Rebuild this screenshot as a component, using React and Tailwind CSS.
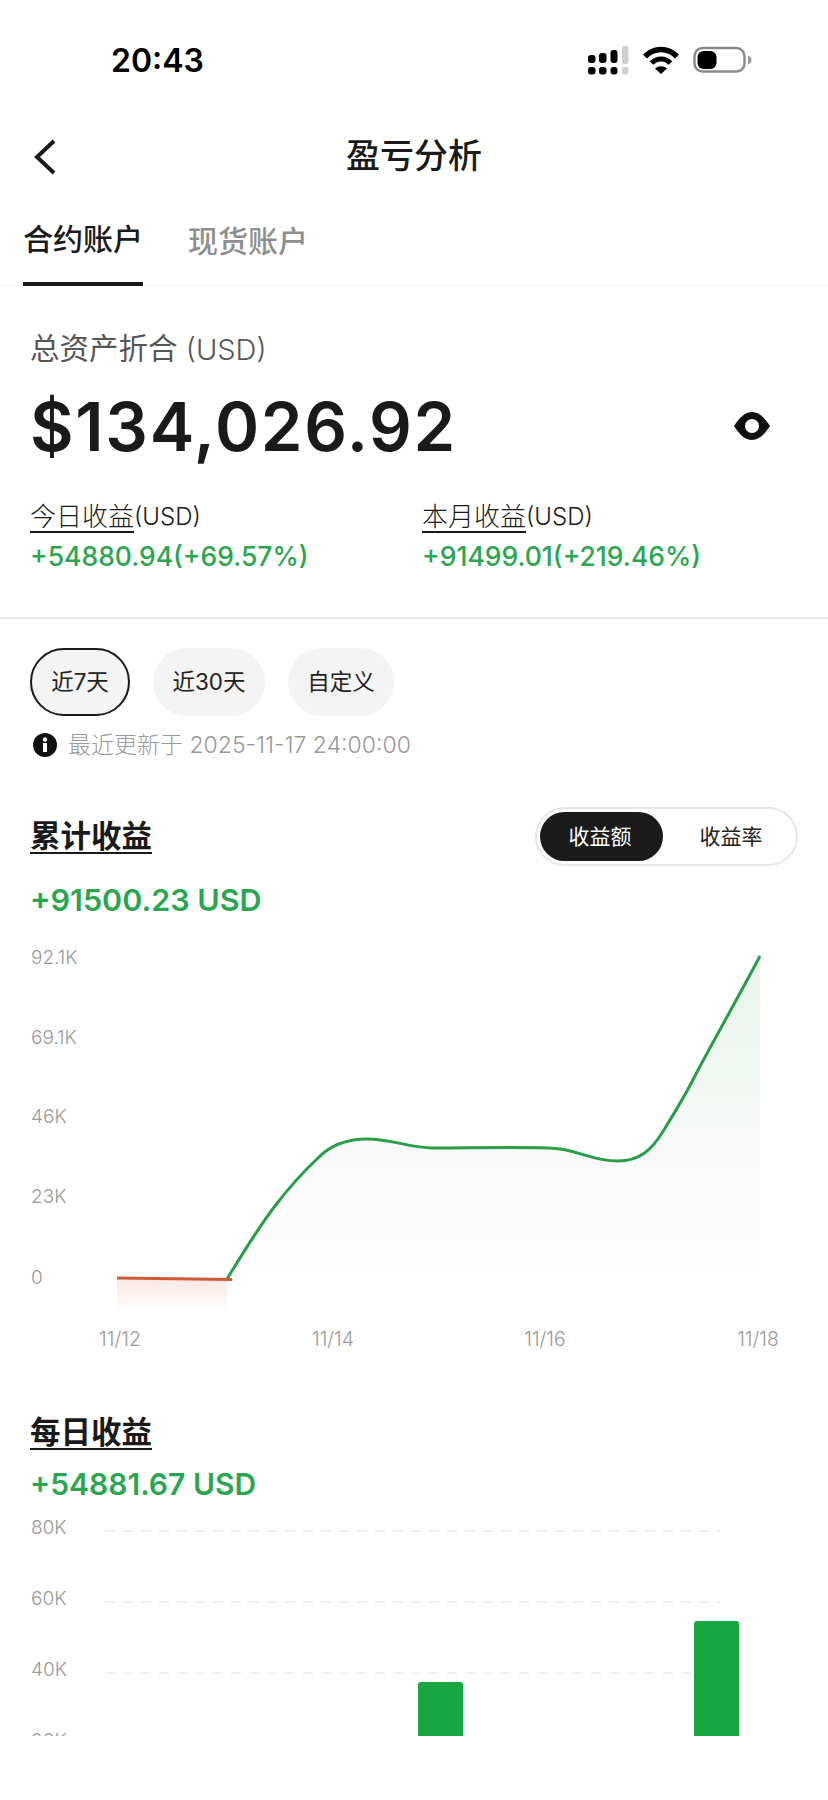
import React from "react";

const linePath =
  "M227 1280 C241 1257 258 1229 275 1207 C291 1186 303 1173 317 1160 C329 1147 345 1140 367 1140 " +
  "C392 1140 410 1149 433 1149 C470 1149 510 1148 549 1149 C575 1149 590 1162 618 1162 " +
  "C640 1162 652 1150 662 1134 C672 1118 685 1097 697 1073 C720 1030 740 995 760 957";

const cumulativeY = [["92.1K", 958], ["69.1K", 1038], ["46K", 1117], ["23K", 1197], ["0", 1278]];
const cumulativeX = [["11/12", 120], ["11/14", 333], ["11/16", 545], ["11/18", 758]];
const dailyY = [["80K", 1527, 1531], ["60K", 1598, 1602], ["40K", 1669, 1673], ["20K", 1740, 1744]];

function StatusIcons() {
  return (
    <svg width="166" height="30" viewBox="588 46 166 30">
      <g fill="#000">
        <rect x="588" y="55" width="7.5" height="8" rx="3" />
        <rect x="599" y="53" width="7.5" height="10" rx="3" />
        <rect x="610.500" y="50" width="7" height="13" rx="3" />
        <rect x="588" y="67" width="7.500" height="7.500" rx="3" />
        <rect x="599" y="67" width="7.500" height="7.500" rx="3" />
        <rect x="610.500" y="67" width="7" height="7.500" rx="3" />
      </g>
      <rect x="622" y="46" width="6.500" height="18" rx="2" fill="#cfcfcf" />
      <rect x="622" y="67" width="6.500" height="7.500" rx="2" fill="#cfcfcf" />
      <path d="M645 56.500C654 47 668 47 677 56.500" fill="none" stroke="#000" strokeWidth="5.500" />
      <path d="M651.500 63C657 57.500 665 57.500 670.500 63" fill="none" stroke="#000" strokeWidth="5" />
      <path d="M655 68.500C658.500 65.500 663.500 65.500 667 68.500L661 74Z" fill="#000" />
      <rect x="694.500" y="48" width="50" height="23.500" rx="8" fill="none" stroke="#8a8a8a" strokeWidth="2.500" />
      <rect x="697.500" y="51" width="19" height="18" rx="6" fill="#000" />
      <path d="M748 55.500C750.500 56.500 751.500 58 751.500 60C751.500 62 750.500 63.500 748 64.500Z" fill="#9a9a9a" />
    </svg>
  );
}

function Pill({ label, active, width }) {
  return (
    <div
      className={`flex h-[68px] items-center justify-center rounded-full bg-[#f4f4f4] text-[22.500px] text-[#222] ${width} ${
        active ? "border-2 border-[#1a1a1a]" : ""
      }`}
    >
      {label}
    </div>
  );
}

export default function App() {
  return (
    <div
      className="h-[1800px] w-[828px] overflow-hidden bg-white text-[#1a1a1a]"
      style={{ fontFamily: "Inter, 'Noto Sans CJK SC', sans-serif" }}
    >
      {/* status bar */}
      <div className="flex h-[122px] items-center justify-between pl-[111px] pr-[74px]">
        <span className="text-[32px] font-semibold leading-none text-black">20:43</span>
        <StatusIcons />
      </div>

      {/* header */}
      <div className="grid h-[70px] grid-cols-[1fr_auto_1fr] items-center pl-[33px]">
        <svg width="24" height="36" viewBox="0 0 24 36" fill="none">
          <path d="M21 2L4 18L21 34" stroke="#1a1a1a" strokeWidth="4" />
        </svg>
        <div className="pb-[3px] pr-[33px] text-[34px] font-medium leading-none">盈亏分析</div>
      </div>

      {/* tabs */}
      <div className="flex h-[94px] gap-[45px] border-b border-[#f1f1f1] pl-[23px]">
        <div className="-mb-px flex w-[120px] items-center border-b-[4px] border-[#1a1a1a] pt-[4px] text-[30px] font-medium leading-none">
          <span className="whitespace-nowrap">合约账户</span>
        </div>
        <div className="flex items-center pt-[4px] text-[30px] font-medium leading-none text-[#8f8f8f]">
          现货账户
        </div>
      </div>

      {/* total */}
      <div className="border-b-2 border-[#eaeaea] pb-[46px] pl-[30px] pr-[58px]">
        <div className="mt-[43px] flex h-[40px] items-center text-[29.500px] leading-none text-[#555]">
          总资产折合&nbsp;<span className="text-[29px] font-light">(USD)</span>
        </div>
        <div className="mt-[17px] flex h-[80px] items-center justify-between">
          <span className="text-[67px] font-semibold leading-none tracking-[1.700px]">$134,026.92</span>
          <svg width="36" height="28" viewBox="0 0 36 28">
            <path d="M0 14C6 5 11 0 18 0C25 0 30 5 36 14C30 23 25 28 18 28C11 28 6 23 0 14Z" fill="#111" />
            <circle cx="18" cy="14" r="7" fill="#fff" />
          </svg>
        </div>
        <div className="mt-[36px] grid grid-cols-[392px_1fr]">
          <div className="flex h-[30px] items-center text-[26px] font-light leading-none">
            <span className="underline decoration-2 underline-offset-[5px]">今日收益</span>
            <span className="text-[24px]">(USD)</span>
          </div>
          <div className="flex h-[30px] items-center text-[26px] font-light leading-none">
            <span className="underline decoration-2 underline-offset-[5px]">本月收益</span>
            <span className="text-[24px]">(USD)</span>
          </div>
          <div className="mt-[9px] h-[30px] text-[26.500px] font-medium leading-[30px] text-[#2aa650]">
            +54880.94(+69.57%)
          </div>
          <div className="mt-[9px] h-[30px] text-[26.500px] font-medium leading-[30px] text-[#2aa650]">
            +91499.01(+219.46%)
          </div>
        </div>
      </div>

      {/* range filter */}
      <div className="mt-[29px] flex gap-[23px] pl-[30px]">
        <Pill label="近7天" active width="w-[100px]" />
        <Pill label="近30天" width="w-[112px]" />
        <Pill label="自定义" width="w-[106px]" />
      </div>
      <div className="mt-[14px] flex h-[30px] items-center gap-[11px] pl-[33px]">
        <svg width="24" height="24" viewBox="0 0 24 24">
          <circle cx="12" cy="12" r="12" fill="#111" />
          <rect x="10" y="10" width="4" height="9" fill="#fff" />
          <circle cx="12" cy="6.500" r="2.200" fill="#fff" />
        </svg>
        <span className="text-[23px] font-light leading-none text-[#999]">最近更新于 2025-11-17 24:00:00</span>
      </div>

      {/* cumulative */}
      <div className="mt-[47px] flex items-center justify-between pl-[30px] pr-[30px]">
        <div className="text-[30.500px] font-semibold leading-none underline decoration-2 underline-offset-[5px]">
          累计收益
        </div>
        <div className="flex h-[59px] w-[263px] items-center rounded-full border-2 border-[#e6e6e6] p-[3px]">
          <div className="flex h-[49px] w-[123px] items-center justify-center rounded-full bg-[#1a1a1a] pr-[3px] text-[21px] text-white">
            收益额
          </div>
          <div className="flex flex-1 items-center justify-center pl-[6px] text-[21px] text-[#222]">收益率</div>
        </div>
      </div>
      <div className="mt-[16px] flex h-[36px] items-center pl-[30px] text-[30.500px] font-semibold leading-none text-[#2aa650]">
        +91500.23 USD
      </div>

      <svg width="828" height="496" viewBox="0 919 828 496" className="block">
        <defs>
          <linearGradient id="areaGreen" gradientUnits="userSpaceOnUse" x1="0" y1="957" x2="0" y2="1282">
            <stop offset="0" stopColor="#e8f6ec" />
            <stop offset="0.45" stopColor="#f4f8f5" />
            <stop offset="0.62" stopColor="#f9f9f9" />
            <stop offset="1" stopColor="#ffffff" />
          </linearGradient>
          <linearGradient id="areaRed" gradientUnits="userSpaceOnUse" x1="0" y1="1280" x2="0" y2="1312">
            <stop offset="0" stopColor="#f8e8e3" />
            <stop offset="1" stopColor="#ffffff" />
          </linearGradient>
        </defs>
        <path d={`${linePath} L760 1280 L227 1280 Z`} fill="url(#areaGreen)" />
        <rect x="117" y="1280" width="110" height="32" fill="url(#areaRed)" />
        <path d={linePath} fill="none" stroke="#2a9d48" strokeWidth="3" />
        <path d="M117 1279L232 1280.500" fill="none" stroke="#cf5a36" strokeWidth="3" />
        {cumulativeY.map(([label, y]) => (
          <text key={label} x="31" y={y + 7} fontSize="19" fontWeight="300" fill="#999">
            {label}
          </text>
        ))}
        {cumulativeX.map(([label, x]) => (
          <text key={label} x={x} y="1347" fontSize="19.500" fontWeight="300" fill="#999" textAnchor="middle">
            {label}
          </text>
        ))}
      </svg>

      {/* daily */}
      <div className="flex h-[36px] items-center pl-[30px]">
        <span className="text-[30.500px] font-semibold leading-none underline decoration-2 underline-offset-[5px]">
          每日收益
        </span>
      </div>
      <div className="mt-[16px] flex h-[36px] items-center pl-[30px] text-[30px] font-semibold leading-none text-[#2aa650]">
        +54881.67 USD
      </div>
      <svg width="828" height="234" viewBox="0 1502 828 234" className="block">
        {dailyY.map(([label, y, lineY]) => (
          <g key={label}>
            <text x="31" y={y + 7} fontSize="19" fontWeight="300" fill="#999">
              {label}
            </text>
            <line x1="105" x2="720" y1={lineY} y2={lineY} stroke="#ececec" strokeWidth="1.500" strokeDasharray="10 8" />
          </g>
        ))}
        <path d="M418 1736V1685Q418 1682 421 1682H460Q463 1682 463 1685V1736Z" fill="#17a63f" />
        <path d="M694 1736V1624Q694 1621 697 1621H736Q739 1621 739 1624V1736Z" fill="#17a63f" />
      </svg>
    </div>
  );
}
